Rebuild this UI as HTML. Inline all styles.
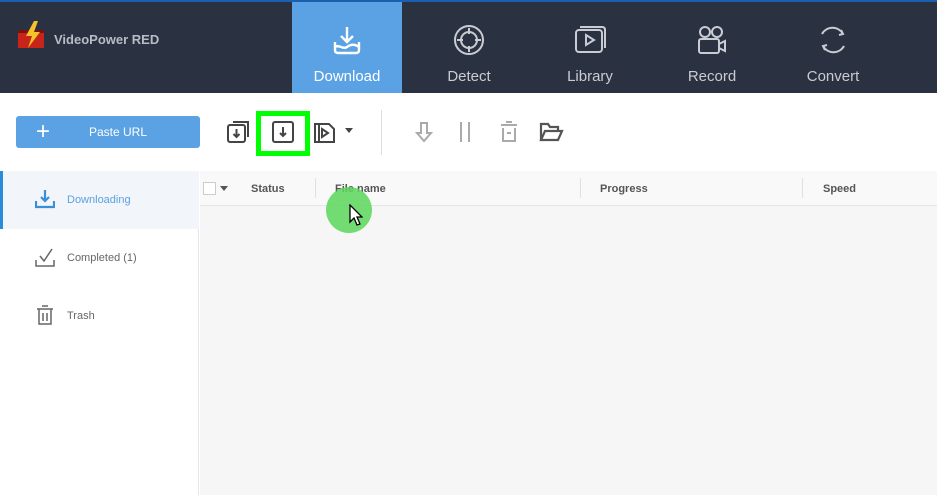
<!DOCTYPE html><html><head><style>
*{margin:0;padding:0;box-sizing:border-box}
body{width:937px;height:495px;overflow:hidden;background:#fff;font-family:"Liberation Sans",sans-serif;position:relative}
.top{position:absolute;left:0;top:0;width:937px;height:93px;background:#2a3242;border-top:2px solid #1a5fb0}
.brand{position:absolute;left:54px;top:30px;color:#b8bcc4;font-size:13px;font-weight:bold}
.tab{position:absolute;top:0;height:91px;width:110px;text-align:center;color:#c9ccd2;font-size:15px}
.tab span{position:absolute;left:0;right:0;top:66px}
.tab svg{position:absolute;left:39px;top:22px}
.abs{position:absolute}
.side{position:absolute;left:0;top:171px;width:199px;height:324px;background:#fff;border-right:1px solid #e6e6e6}
.side div{position:absolute;left:67px;font-size:11px;color:#666}
.main{position:absolute;left:200px;top:171px;width:737px;height:324px;background:#f6f6f6}
.hd{position:absolute;top:12px;font-size:11px;font-weight:bold;color:#555}
</style></head><body>
<div class="top">
<svg class="abs" style="left:16px;top:18px" width="32" height="32" viewBox="0 0 32 32"><rect x="2" y="10" width="26" height="18" fill="#c8241a"/><rect x="2" y="10" width="26" height="3" fill="#7a1410"/><path d="M18 1 L10 16 L16 16 L12 28 L24 12 L18 12 L22 1Z" fill="#f4c22a"/></svg>
<div class="brand">VideoPower RED</div>
<div class="tab" style="left:292px;background:#5aa2e3;color:#fff"><svg width="32" height="32" viewBox="0 0 32 32" fill="none" stroke="#fff" stroke-width="2.4"><path d="M16 3v15M10 12l6 6 6-6M4 18v8c0 2 1 3 3 3h18c2 0 3-1 3-3v-8M4 23c4-3 8 3 12 0s8-3 12 0"/></svg><span>Download</span></div>
<div class="tab" style="left:414px"><svg width="32" height="32" viewBox="0 0 32 32" fill="none" stroke="#c9ccd2" stroke-width="2"><circle cx="16" cy="16" r="14"/><circle cx="16" cy="16" r="8"/><path d="M16 4v6M16 22v6M4 16h6M22 16h6"/></svg><span>Detect</span></div>
<div class="tab" style="left:535px"><svg width="32" height="32" viewBox="0 0 32 32" fill="none" stroke="#c9ccd2" stroke-width="2"><rect x="2" y="6" width="26" height="22" rx="3"/><path d="M6 3h22c2 0 3 1 3 3v18"/><path d="M12 11l8 5-8 5z"/></svg><span>Library</span></div>
<div class="tab" style="left:657px"><svg width="32" height="32" viewBox="0 0 32 32" fill="none" stroke="#c9ccd2" stroke-width="2"><circle cx="9" cy="8" r="5"/><circle cx="21" cy="8" r="5"/><rect x="3" y="15" width="20" height="14" rx="2"/><path d="M23 20l6-3v10l-6-3"/></svg><span>Record</span></div>
<div class="tab" style="left:778px"><svg width="32" height="32" viewBox="0 0 32 32" fill="none" stroke="#c9ccd2" stroke-width="2"><path d="M26 10A12 12 0 0 0 5 10M6 22a12 12 0 0 0 21 0M24 6l2 4-4 1M8 26l-2-4 4-1"/></svg><span>Convert</span></div>
</div>
<div class="abs" style="left:16px;top:116px;width:184px;height:32px;background:#5aa2e3;border-radius:3px;color:#fff;font-size:12px"><span style="position:absolute;left:20px;top:2px;font-size:24px;font-weight:300">+</span><span style="position:absolute;left:73px;top:9px">Paste URL</span></div>
<svg class="abs" style="left:227px;top:120px" width="24" height="24" viewBox="0 0 24 24" fill="none" stroke="#444" stroke-width="2"><rect x="1" y="5" width="17" height="17" rx="2"/><path d="M6 2h15v15"/><path d="M9.5 9v8M6.5 14l3 3 3-3"/></svg>
<div class="abs" style="left:256px;top:111px;width:54px;height:45px;border:5px solid #00ff00"></div>
<svg class="abs" style="left:272px;top:121px" width="22" height="22" viewBox="0 0 22 22" fill="none" stroke="#444" stroke-width="2"><rect x="1" y="1" width="20" height="20" rx="2"/><path d="M11 6v9M8 12l3 3 3-3"/></svg>
<svg class="abs" style="left:314px;top:121px" width="22" height="22" viewBox="0 0 22 22" fill="none" stroke="#444" stroke-width="2"><path d="M1 3h14l5 5v13H1z"/><path d="M5 3v18M8 8l6 4-6 4z"/></svg>
<div class="abs" style="left:345px;top:128px;border:4px solid transparent;border-top:5px solid #444"></div>
<div class="abs" style="left:381px;top:110px;width:1px;height:45px;background:#ddd"></div>
<svg class="abs" style="left:415px;top:121px" width="18" height="22" viewBox="0 0 18 22" fill="none" stroke="#aaa" stroke-width="2"><path d="M6 2h6v10h4l-7 8-7-8h4z"/></svg>
<div class="abs" style="left:460px;top:122px;height:20px;border-left:2px solid #aaa;border-right:2px solid #aaa;width:10px"></div>
<svg class="abs" style="left:499px;top:121px" width="20" height="22" viewBox="0 0 20 22" fill="none" stroke="#aaa" stroke-width="2"><path d="M2 4h16M7 1h6M4 7v13h12V7M8 12h4"/></svg>
<svg class="abs" style="left:539px;top:122px" width="25" height="20" viewBox="0 0 25 20" fill="none" stroke="#555" stroke-width="2.2"><path d="M2 18V2h7l2 3h8v4M2 18l4-9h17l-4 9z"/></svg>
<div class="side">
<div style="left:0;top:0;width:199px;height:58px;background:#f2f5f9;border-left:3px solid #2c8bd8"></div>
<svg class="abs" style="left:35px;top:18px" width="20" height="20" viewBox="0 0 20 20" fill="none" stroke="#3a8fd8" stroke-width="2.2"><path d="M10 1v11M6 8l4 4 4-4M1 12v6h18v-6"/></svg>
<div style="top:23px;color:#5aa2e3">Downloading</div>
<svg class="abs" style="left:35px;top:76px" width="20" height="20" viewBox="0 0 20 20" fill="none" stroke="#666" stroke-width="1.5"><path d="M5 9l4 5 8-12M1 13v6h18v-6"/></svg>
<div style="top:81px">Completed (1)</div>
<svg class="abs" style="left:36px;top:134px" width="18" height="20" viewBox="0 0 18 20" fill="none" stroke="#666" stroke-width="1.5"><path d="M1 4h16M6 1h6M3 4v15h12V4M7 8v8M11 8v8"/></svg>
<div style="top:139px">Trash</div>
</div>
<div class="main">
<div class="abs" style="left:0;top:0;width:737px;height:35px;background:#f9f9f9;border-bottom:1px solid #e6e6e6"></div>
<div class="abs" style="left:3px;top:11px;width:13px;height:13px;border:1px solid #ccc;background:#fff"></div>
<div class="abs" style="left:20px;top:15px;border:4px solid transparent;border-top:5px solid #555"></div>
<div class="hd" style="left:51px">Status</div>
<div class="abs" style="left:115px;top:7px;width:1px;height:20px;background:#e0e0e0"></div>
<div class="hd" style="left:135px">File name</div>
<div class="abs" style="left:380px;top:7px;width:1px;height:20px;background:#e0e0e0"></div>
<div class="hd" style="left:400px">Progress</div>
<div class="abs" style="left:602px;top:7px;width:1px;height:20px;background:#e0e0e0"></div>
<div class="hd" style="left:623px">Speed</div>
<div class="abs" style="left:126px;top:16px;width:46px;height:46px;border-radius:50%;background:rgba(90,215,90,.85)"></div>
<svg class="abs" style="left:149px;top:33px" width="14" height="22" viewBox="0 0 14 22"><path d="M1 1v17l4-4 3 7 3-1-3-7h5z" fill="#fff" stroke="#000" stroke-width="1.3"/></svg>
</div>
</body></html>
